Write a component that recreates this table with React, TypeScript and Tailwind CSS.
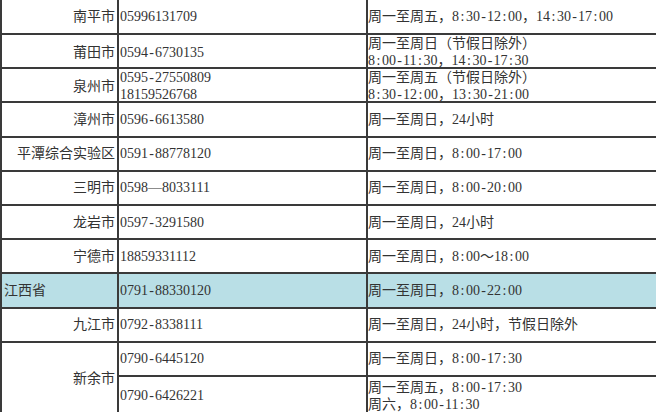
const rows: { city: string; phone: string[]; hours: string[]; h: string }[] = [
  { city: "南平市", phone: ["05996131709"], hours: ["周一至周五，8:30-12:00，14:30-17:00"], h: "h-[35px]" },
  { city: "莆田市", phone: ["0594-6730135"], hours: ["周一至周日（节假日除外）", "8:00-11:30，14:30-17:30"], h: "h-[34.2px]" },
  { city: "泉州市", phone: ["0595-27550809", "18159526768"], hours: ["周一至周五（节假日除外）", "8:30-12:00，13:30-21:00"], h: "h-[34.2px]" },
  { city: "漳州市", phone: ["0596-6613580"], hours: ["周一至周日，24小时"], h: "h-[34.2px]" },
  { city: "平潭综合实验区", phone: ["0591-88778120"], hours: ["周一至周日，8:00-17:00"], h: "h-[34.2px]" },
  { city: "三明市", phone: ["0598—8033111"], hours: ["周一至周日，8:00-20:00"], h: "h-[34.2px]" },
  { city: "龙岩市", phone: ["0597-3291580"], hours: ["周一至周日，24小时"], h: "h-[34.2px]" },
  { city: "宁德市", phone: ["18859331112"], hours: ["周一至周日，8:00～18:00"], h: "h-[34.2px]" },
];

// SimSun-style half-width punctuation: ":" and "-" take the width of a digit
const Txt = ({ t }: { t: string }) => (
  <>
    {t.split(/([:\-])/).map((part, i) =>
      part === ":" || part === "-" ? (
        <span key={i} className="inline-block w-[7px] text-center align-top">
          {part}
        </span>
      ) : (
        <span key={i}>{part}</span>
      ),
    )}
  </>
);

const Lines = ({ items }: { items: string[] }) => (
  <div className="flex flex-col justify-center leading-[17px] whitespace-nowrap">
    {items.map((t) => (
      <span key={t}>
        <Txt t={t} />
      </span>
    ))}
  </div>
);

export default function App() {
  return (
    <div
      className="h-[412px] w-[656px] overflow-hidden bg-white text-[14px] text-[#333]"
      style={{ fontFamily: '"Liberation Serif", "Noto Sans CJK SC", serif' }}
    >
      <div className="w-[720px] border-l-2 border-[#3a3a3a]">
        {rows.map((r) => (
          <div
            key={r.city}
            className={`grid grid-cols-[117px_249px_1fr] border-b-2 border-[#3a3a3a] ${r.h}`}
          >
            <div className="flex items-center justify-end border-r-2 border-[#3a3a3a] pr-[2px] whitespace-nowrap">
              {r.city}
            </div>
            <div className="flex items-center border-r-2 border-[#3a3a3a] pl-[1px]">
              <Lines items={r.phone} />
            </div>
            <div className="flex items-center pl-0">
              <Lines items={r.hours} />
            </div>
          </div>
        ))}

        <div className="grid h-[34.2px] grid-cols-[117px_249px_1fr] border-b-2 border-[#3a3a3a] bg-[#b9dfe6]">
          <div className="flex items-center border-r-2 border-[#3a3a3a] pl-[2px]">江西省</div>
          <div className="flex items-center border-r-2 border-[#3a3a3a] pl-[1px]">
            <Lines items={["0791-88330120"]} />
          </div>
          <div className="flex items-center">
            <Lines items={["周一至周日，8:00-22:00"]} />
          </div>
        </div>

        <div className="grid h-[34.2px] grid-cols-[117px_249px_1fr] border-b-2 border-[#3a3a3a]">
          <div className="flex items-center justify-end border-r-2 border-[#3a3a3a] pr-[2px]">九江市</div>
          <div className="flex items-center border-r-2 border-[#3a3a3a] pl-[1px]">
            <Lines items={["0792-8338111"]} />
          </div>
          <div className="flex items-center">
            <Lines items={["周一至周日，24小时，节假日除外"]} />
          </div>
        </div>

        <div className="grid grid-cols-[117px_249px_1fr] grid-rows-[34.2px_38px]">
          <div className="row-span-2 flex items-center justify-end border-r-2 border-[#3a3a3a] pr-[2px]">新余市</div>
          <div className="flex items-center border-b-2 border-r-2 border-[#3a3a3a] pl-[1px]">
            <Lines items={["0790-6445120"]} />
          </div>
          <div className="flex items-center border-b-2 border-[#3a3a3a]">
            <Lines items={["周一至周日，8:00-17:30"]} />
          </div>
          <div className="flex items-center border-r-2 border-[#3a3a3a] pl-[1px]">
            <Lines items={["0790-6426221"]} />
          </div>
          <div className="flex items-center">
            <Lines items={["周一至周五，8:00-17:30", "周六，8:00-11:30"]} />
          </div>
        </div>
      </div>
    </div>
  );
}
